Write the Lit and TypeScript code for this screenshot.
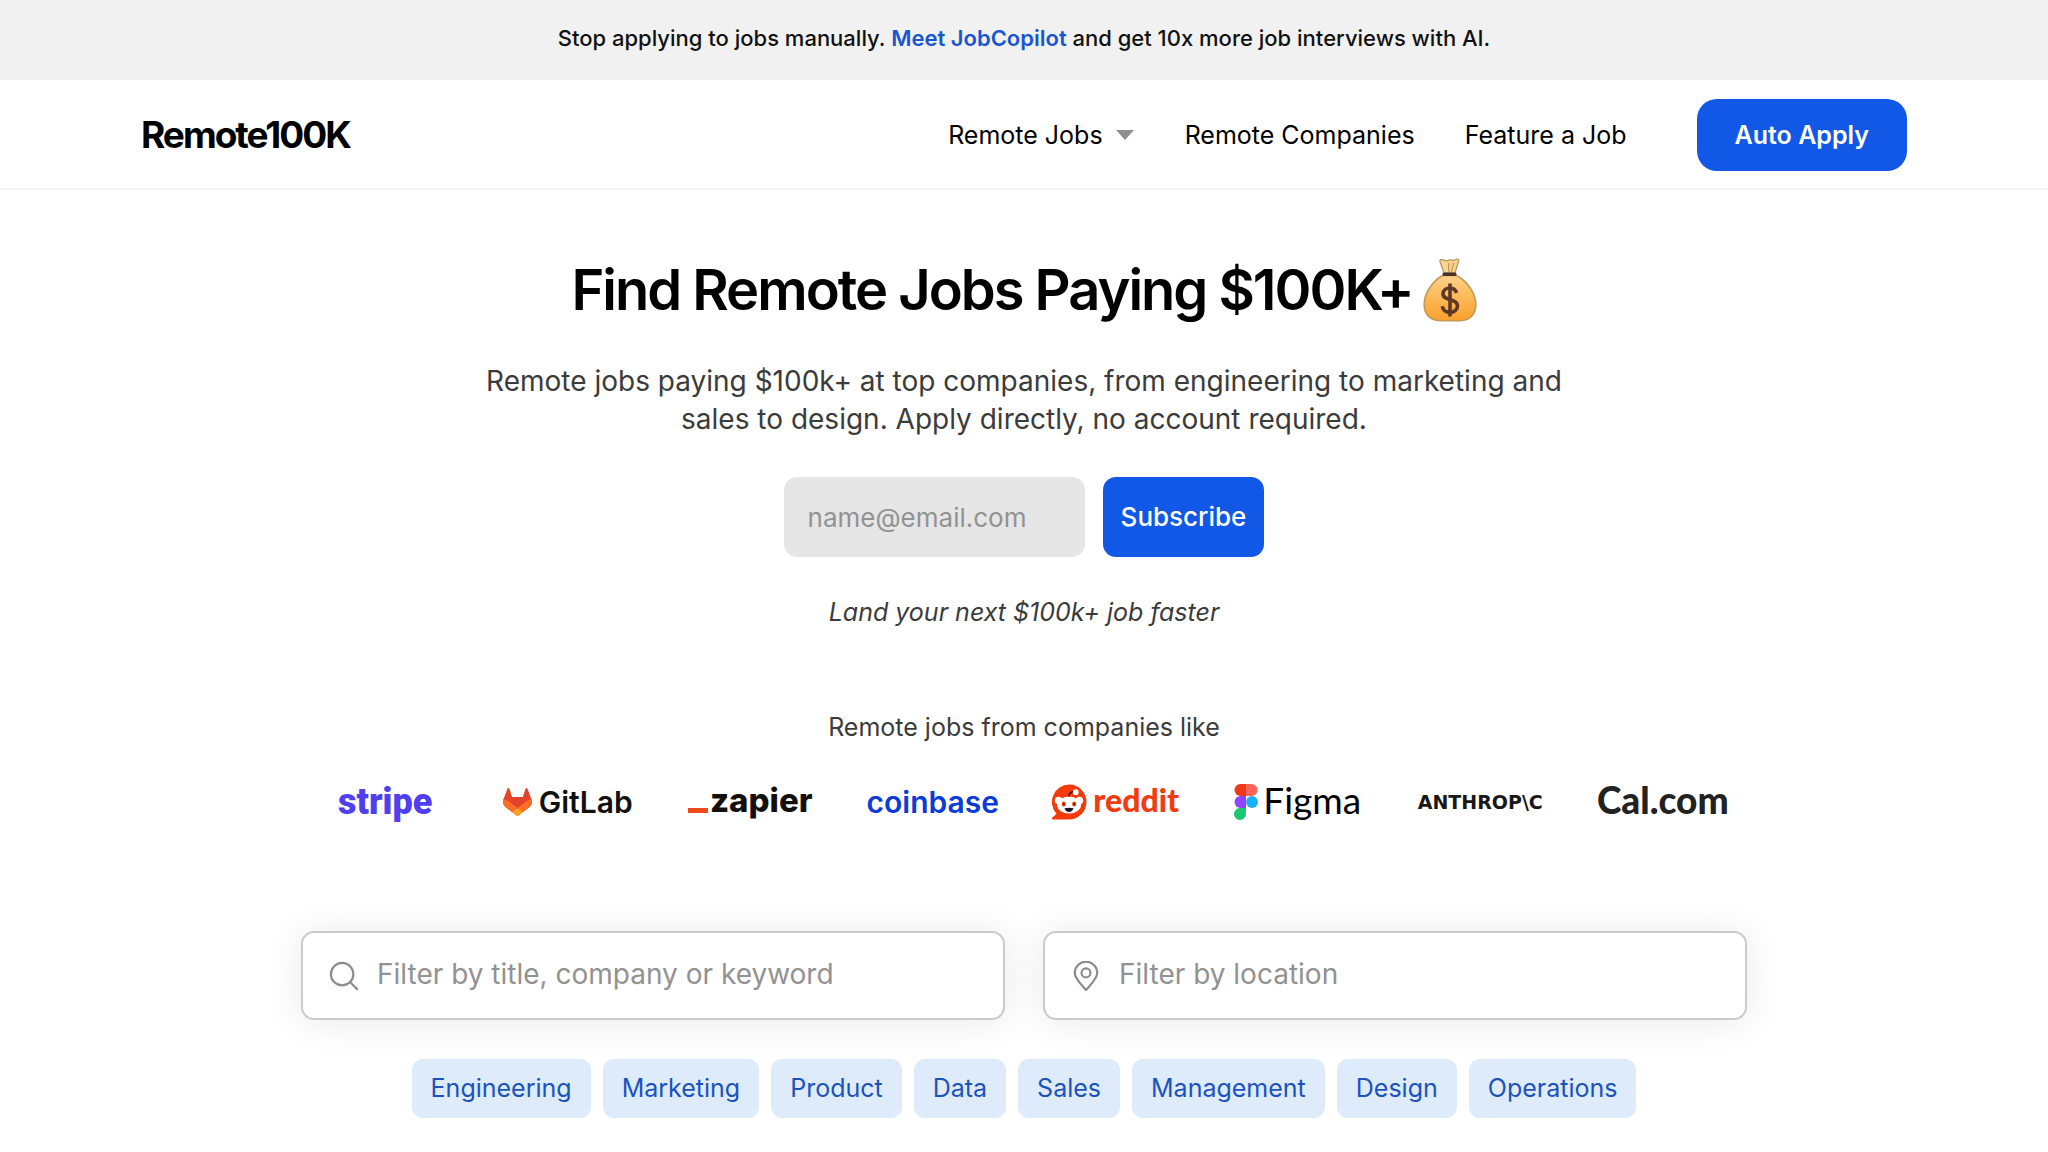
import { LitElement, html, css, svg } from "lit";
import { customElement } from "lit/decorators.js";

const categories = [
  "Engineering",
  "Marketing",
  "Product",
  "Data",
  "Sales",
  "Management",
  "Design",
  "Operations",
];

const moneyBag = html`<svg class="bag" viewBox="0 0 54 64" role="img" aria-label="money bag">
  <defs>
    <linearGradient id="bag-fill" x1="0" y1="0" x2="0" y2="1">
      <stop offset="0" stop-color="#fbd08a" />
      <stop offset="0.45" stop-color="#fcbb5c" />
      <stop offset="1" stop-color="#f9a02c" />
    </linearGradient>
  </defs>
  <path d="M21 15 17 3.500Q16.500 1 19 1.600L24 3Q27 .8 30 2.600L34 1.200Q36.500 1 35.500 3.500L32 15Z" fill="#fad48d" stroke="#b79a67" stroke-width="1.300" />
  <path d="M26 5Q25 10 26 14M31 5Q29 9 28.500 14" fill="none" stroke="#b58b4c" stroke-width="1" />
  <path d="M20 17.500C12 21 1.500 33 1.200 46C1 54 5 62.500 17 62.800H37C49 62.500 53 54 52.800 46C52.500 33 41.500 21 33 17.500Z" fill="url(#bag-fill)" stroke="#c39a58" stroke-width="1.600" />
  <rect x="19.500" y="14.500" width="14" height="3.400" rx="1.500" fill="#4b3024" />
  <path d="M33.500 35C32.500 31.500 30 30 27 30C23 30 20 32.500 20 36C20 39.500 23.500 40.500 27 41.500C31 42.600 34.500 44 34.500 48C34.500 51.800 31 54.500 27 54.500C23 54.500 19.800 52 19.300 48.300M27 25.500V58.500" fill="none" stroke="#5d3828" stroke-width="3.600" />
</svg>`;

const gitlabMark = svg`<svg class="tanuki" viewBox="0 0 25 24" aria-hidden="true">
  <path fill="#e24329" d="M24.507 9.500l-.034-.09L21.082.562a.896.896 0 0 0-1.694.091l-2.290 7.010H7.825L5.535.653a.898.898 0 0 0-1.694-.09L.451 9.411.416 9.500a6.297 6.297 0 0 0 2.090 7.278l.012.01.03.022 5.160 3.867 2.560 1.935 1.554 1.176a1.051 1.051 0 0 0 1.268 0l1.555-1.176 2.560-1.935 5.197-3.890.014-.01A6.297 6.297 0 0 0 24.507 9.500z" />
  <path fill="#fc6d26" d="M24.507 9.500l-.034-.09a11.440 11.440 0 0 0-4.560 2.051l-7.447 5.632 4.742 3.584 5.197-3.890.014-.01A6.297 6.297 0 0 0 24.507 9.500z" />
  <path fill="#fca326" d="M7.707 20.677l2.560 1.935 1.555 1.176a1.051 1.051 0 0 0 1.268 0l1.555-1.176 2.560-1.935-4.743-3.584-4.755 3.584z" />
  <path fill="#fc6d26" d="M5.010 11.461a11.430 11.430 0 0 0-4.560-2.050L.416 9.500a6.297 6.297 0 0 0 2.090 7.278l.012.01.03.022 5.160 3.867 4.745-3.584-7.444-5.632z" />
</svg>`;

const redditMark = svg`<svg class="snoo" viewBox="0 0 36 36" aria-hidden="true">
  <path fill="#f53a0c" d="M18 .5a17.500 17.500 0 0 1 0 35H2.200c-1.300 0-1.700-1-1-1.800L5.500 29.800A17.500 17.500 0 0 1 18 .5z" />
  <circle cx="7.600" cy="16.500" r="3.800" fill="#fff" />
  <circle cx="28.400" cy="16.500" r="3.800" fill="#fff" />
  <ellipse cx="18" cy="21" rx="12" ry="8.600" fill="#fff" />
  <path d="M18 12.500c0-3 1.800-4.800 5-4.800" fill="none" stroke="#2b1208" stroke-width="1.500" />
  <circle cx="24.800" cy="8.200" r="2.900" fill="#fff" />
  <ellipse cx="12.800" cy="20" rx="2.100" ry="2.600" fill="#f53a0c" />
  <ellipse cx="23.200" cy="20" rx="2.100" ry="2.600" fill="#f53a0c" />
  <circle cx="12.800" cy="20" r=".9" fill="#5a1a08" />
  <circle cx="23.200" cy="20" r=".9" fill="#5a1a08" />
  <path d="M13.500 24.300q4.500-.9 9 0c-.6 2.400-2.300 3.700-4.500 3.700s-3.900-1.300-4.500-3.700z" fill="#101828" />
</svg>`;

const figmaMark = svg`<svg class="figma-mark" viewBox="0 0 24 36" aria-hidden="true">
  <path fill="#f0381a" d="M6.500 0H12V12H6.500A6 6 0 0 1 6.500 0z" />
  <path fill="#ff6359" d="M12 0H17.500A6 6 0 0 1 17.500 12H12z" />
  <path fill="#8f45ff" d="M6.500 12H12V24H6.500A6 6 0 0 1 6.500 12z" />
  <circle cx="18" cy="18" r="6" fill="#1ab0f5" />
  <path fill="#1cc973" d="M6.500 24H12V30A6 6 0 1 1 6.500 24z" />
</svg>`;

const searchIcon = svg`<svg class="field-icon" viewBox="0 0 32 32" fill="none" stroke="currentColor" stroke-width="2.300" stroke-linecap="round" aria-hidden="true">
  <circle cx="14" cy="14" r="12" />
  <path d="M22.600 22.600 30 30" />
</svg>`;

const pinIcon = svg`<svg class="field-icon" viewBox="0 0 32 32" fill="none" stroke="currentColor" stroke-width="2.300" stroke-linejoin="round" aria-hidden="true">
  <path d="M16 31C11 25 4 18.500 4 12.700a12 12 0 0 1 24 0C28 18.500 21 25 16 31z" />
  <circle cx="16" cy="12.700" r="4.800" />
</svg>`;

@customElement("app-root")
export class AppRoot extends LitElement {
  static styles = css`
    :host {
      display: block;
      min-height: 100vh;
      background: #fff;
      color: #000;
      font-family: Inter, "Liberation Sans", sans-serif;
      font-size: 25px;
      line-height: 32px;
    }
    *,
    *::before,
    *::after {
      box-sizing: border-box;
    }
    a {
      color: inherit;
      text-decoration: none;
    }
    button,
    input {
      font: inherit;
      border: 0;
      margin: 0;
    }
    button {
      cursor: pointer;
    }
    .banner {
      background: #f1f1f1;
      color: #111;
      padding: 22px 24px 26px;
      text-align: center;
      font-size: 22px;
      font-weight: 500;
    }
    .banner a {
      color: #1a56cf;
      font-weight: 600;
    }
    header {
      border-bottom: 2px solid #f3f3f3;
      padding: 19px 24px 17px;
    }
    .bar {
      display: flex;
      align-items: center;
      justify-content: space-between;
      max-width: 1766px;
      margin: 0 auto;
    }
    .brand {
      font-size: 37px;
      line-height: 48px;
      font-weight: 700;
      letter-spacing: -2px;
    }
    nav {
      display: flex;
      align-items: center;
      gap: 50px;
    }
    .menu {
      display: flex;
      align-items: center;
      gap: 12px;
      padding: 0;
      background: none;
      color: inherit;
    }
    .caret {
      width: 20px;
      height: 12px;
      fill: #8f8f8f;
    }
    .cta {
      margin-left: 20px;
      padding: 20px 38px;
      border-radius: 20px;
      background: #1258e6;
      color: #fff;
      font-weight: 600;
    }
    main {
      display: flex;
      flex-direction: column;
      align-items: center;
      padding: 68px 24px 34px;
      color: #3b3b3b;
    }
    h1 {
      display: flex;
      align-items: center;
      gap: 10px;
      margin: 0;
      color: #000;
      font-size: 56px;
      line-height: 64px;
      font-weight: 600;
      letter-spacing: -2px;
    }
    .bag {
      width: 54px;
      height: 64px;
      flex: none;
    }
    .lead {
      max-width: 1100px;
      margin: 40px 0 0;
      font-size: 28px;
      line-height: 38px;
      text-align: center;
    }
    .signup {
      display: flex;
      gap: 18px;
      margin-top: 39px;
      font-size: 26px;
    }
    .signup input {
      width: 301px;
      height: 80px;
      padding: 0 24px;
      border-radius: 13px;
      background: #e6e6e6;
      color: #222;
    }
    .signup button {
      padding: 0 18px;
      border-radius: 13px;
      background: #1258e6;
      color: #fff;
      font-weight: 500;
    }
    ::placeholder {
      color: #929292;
      opacity: 1;
    }
    .tagline {
      margin: 39px 0 0;
      font-style: italic;
    }
    .from {
      margin: 83px 0 0;
    }
    .logos {
      display: grid;
      grid-template-columns: repeat(8, 1fr);
      width: 100%;
      max-width: 1460px;
      margin: 39px 0 0;
      padding: 0;
      list-style: none;
    }
    .logo {
      display: flex;
      align-items: center;
      justify-content: center;
      height: 40px;
      line-height: 40px;
      white-space: nowrap;
    }
    .stripe {
      font-family: Roboto, sans-serif;
      font-size: 36px;
      font-weight: 900;
      color: #4f3ff0;
    }
    .gitlab {
      gap: 7px;
      font-size: 30px;
      font-weight: 600;
      color: #111;
    }
    .tanuki {
      width: 29px;
      height: 28px;
    }
    .zapier {
      gap: 2px;
      font-size: 33px;
      font-weight: 800;
      color: #140f0c;
    }
    .zapier span:last-child {
      padding-bottom: 4px;
    }
    .dash {
      width: 20px;
      height: 5px;
      margin-top: 16px;
      background: #ee4a1c;
    }
    .coinbase {
      font-size: 30px;
      font-weight: 600;
      color: #0b3bd8;
    }
    .geometric {
      font-family: Lato, sans-serif;
      padding-bottom: 4px;
    }
    .reddit {
      gap: 6px;
      font-size: 32px;
      font-weight: 900;
      color: #f03c10;
    }
    .snoo {
      width: 36px;
      height: 36px;
    }
    .figma {
      gap: 5px;
      font-size: 37px;
      color: #000;
    }
    .figma-mark {
      width: 24px;
      height: 36px;
    }
    .anthropic {
      font-family: "DejaVu Sans", sans-serif;
      font-size: 19px;
      font-weight: 700;
      color: #181818;
    }
    .cal {
      font-size: 37px;
      font-weight: 900;
      color: #222;
    }
    .filters {
      display: grid;
      grid-template-columns: 1fr 1fr;
      gap: 38px;
      width: 100%;
      max-width: 1446px;
      margin-top: 109px;
    }
    .field {
      display: flex;
      align-items: center;
      gap: 18px;
      height: 89px;
      padding: 0 26px;
      border: 2px solid #cbcbcb;
      border-radius: 13px;
      background: #fff;
      box-shadow: 0 2px 38px rgba(0, 0, 0, 0.09);
      color: #8c8c8c;
      font-size: 28px;
    }
    .field-icon {
      width: 30px;
      height: 30px;
      flex: none;
    }
    .field input {
      flex: 1;
      min-width: 0;
      height: 48px;
      padding: 0 0 4px;
      background: none;
      color: #222;
      outline: none;
    }
    .chips {
      display: flex;
      flex-wrap: wrap;
      justify-content: center;
      gap: 12px;
      margin-top: 39px;
    }
    .chip {
      padding: 13px 19px 14px;
      border-radius: 11px;
      background: #deebfa;
      color: #1b53be;
    }
  `;

  render() {
    return html`
      <div class="banner">
        Stop applying to jobs manually. <a href="#copilot">Meet JobCopilot</a> and get 10x more job
        interviews with AI.
      </div>
      <header>
        <div class="bar">
          <a class="brand" href="#home">Remote100K</a>
          <nav aria-label="Main">
            <button class="menu" type="button" aria-haspopup="true">
              Remote Jobs
              <svg class="caret" viewBox="0 0 20 12" aria-hidden="true"><path d="M1 1H19L10 11Z" /></svg>
            </button>
            <a href="#companies">Remote Companies</a>
            <a href="#feature">Feature a Job</a>
            <a class="cta" href="#auto-apply">Auto Apply</a>
          </nav>
        </div>
      </header>
      <main>
        <h1>Find Remote Jobs Paying $100K+${moneyBag}</h1>
        <p class="lead">
          Remote jobs paying $100k+ at top companies, from engineering to marketing and sales to
          design. Apply directly, no account required.
        </p>
        <form class="signup" @submit=${(e: Event) => e.preventDefault()}>
          <input type="email" placeholder="name@email.com" aria-label="Email address" />
          <button type="submit">Subscribe</button>
        </form>
        <p class="tagline">Land your next $100k+ job faster</p>
        <p class="from">Remote jobs from companies like</p>
        <ul class="logos">
          <li class="logo stripe">stripe</li>
          <li class="logo gitlab">${gitlabMark}<span>GitLab</span></li>
          <li class="logo zapier"><span class="dash"></span><span>zapier</span></li>
          <li class="logo coinbase">coinbase</li>
          <li class="logo reddit">${redditMark}<span class="geometric">reddit</span></li>
          <li class="logo figma">${figmaMark}<span class="geometric">Figma</span></li>
          <li class="logo anthropic">ANTHROP\\C</li>
          <li class="logo cal"><span class="geometric">Cal.com</span></li>
        </ul>
        <div class="filters">
          <label class="field">
            ${searchIcon}
            <input type="text" placeholder="Filter by title, company or keyword" aria-label="Filter by title, company or keyword" />
          </label>
          <label class="field">
            ${pinIcon}
            <input type="text" placeholder="Filter by location" aria-label="Filter by location" />
          </label>
        </div>
        <div class="chips">
          ${categories.map((name) => html`<a class="chip" href="#${name.toLowerCase()}">${name}</a>`)}
        </div>
      </main>
    `;
  }
}
